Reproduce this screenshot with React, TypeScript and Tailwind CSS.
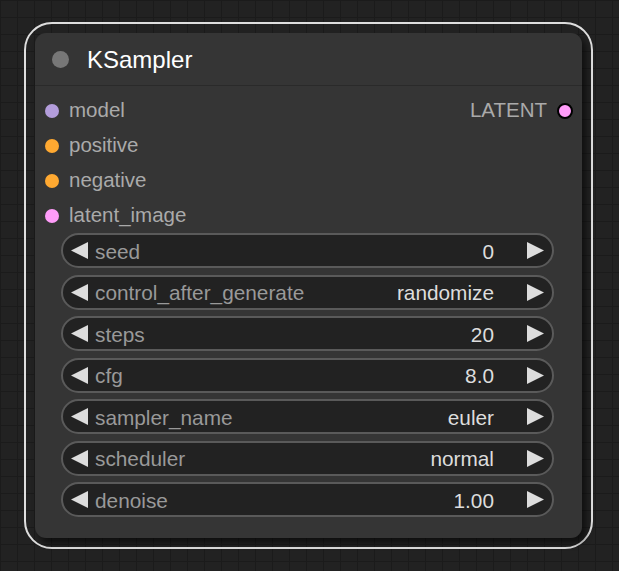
import React from 'react'

type Slot = { name: string; color: string }

const inputs: Slot[] = [
  { name: 'model', color: 'bg-[#b39ddb]' },
  { name: 'positive', color: 'bg-[#ffa931]' },
  { name: 'negative', color: 'bg-[#ffa931]' },
  { name: 'latent_image', color: 'bg-[#ff9cf9]' },
]

const widgets = [
  { label: 'seed', value: '0' },
  { label: 'control_after_generate', value: 'randomize' },
  { label: 'steps', value: '20' },
  { label: 'cfg', value: '8.0' },
  { label: 'sampler_name', value: 'euler' },
  { label: 'scheduler', value: 'normal' },
  { label: 'denoise', value: '1.00' },
]

const Arrow = ({ dir }: { dir: 'left' | 'right' }) => (
  <svg width="17" height="17" viewBox="0 0 17 17" className="shrink-0">
    {dir === 'left' ? (
      <polygon points="0,8.5 17,0 17,17" fill="#dddddd" />
    ) : (
      <polygon points="17,8.5 0,0 0,17" fill="#dddddd" />
    )}
  </svg>
)

const Widget = ({ label, value }: { label: string; value: string }) => (
  <div className="flex h-[35px] items-center rounded-full border-2 border-[#5a5a5a] bg-[#222222] pl-[8px] pr-[8px] text-[20.8px]">
    <Arrow dir="left" />
    <span className="ml-[7px] flex-1 pt-[3px] text-[#999999]">{label}</span>
    <span className="pt-[3px] text-[#dddddd]">{value}</span>
    <span className="ml-[33px]">
      <Arrow dir="right" />
    </span>
  </div>
)

export default function App() {
  return (
    <div
      className={`
        w-[619px]
        h-[571px]
        pt-[22px]
        pl-[24px]
        bg-[#222222]
        bg-[linear-gradient(to_right,#1b1b1b_1px,transparent_1px),linear-gradient(to_bottom,#1b1b1b_1px,transparent_1px)]
        bg-[size:17px_17px]
        font-['Liberation_Sans',Arial,sans-serif]
        text-[20.5px]
        leading-none
      `}
    >
      {/* selection outline */}
      <div className="w-[569px] h-[527px] rounded-[28px] border-2 border-[#dedede] p-[9px]">
        {/* node */}
        <div className="h-full rounded-[11px] bg-[#353535] shadow-[4px_5px_6px_rgba(0,0,0,0.55)]">
          {/* title */}
          <div className="flex h-[53px] items-center border-b border-[#2a2a2a] pl-[17px]">
            <div className="h-[17px] w-[17px] rounded-full bg-[#777777]" />
            <span className="ml-[18px] pt-[2px] text-[24px] text-white">KSampler</span>
          </div>

          {/* slots */}
          <div className="pt-[7px]">
            {inputs.map((slot, i) => (
              <div key={slot.name} className="flex h-[35px] items-center pl-[10px] pr-[9px]">
                <div className={`h-[14px] w-[14px] rounded-full ${slot.color}`} />
                <span className="ml-[10px] flex-1 text-[#aaaaaa]">{slot.name}</span>
                {i === 0 && (
                  <>
                    <span className="text-[#aaaaaa]">LATENT</span>
                    <div className="ml-[10px] h-[16px] w-[16px] rounded-full border-2 border-black bg-[#ff9cf9]" />
                  </>
                )}
              </div>
            ))}
          </div>

          {/* widgets */}
          <div className="ml-[26px] mr-[28px] flex flex-col gap-[6.5px]">
            {widgets.map((w) => (
              <Widget key={w.label} label={w.label} value={w.value} />
            ))}
          </div>
        </div>
      </div>
    </div>
  )
}
